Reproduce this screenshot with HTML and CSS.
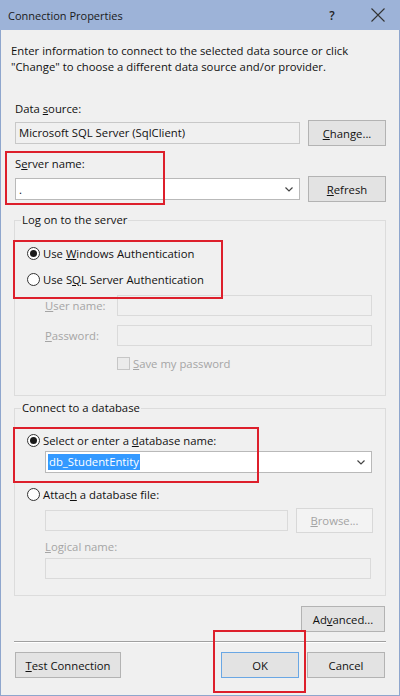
FILE: index.html
```html
<!DOCTYPE html>
<html>
<head>
<meta charset="utf-8">
<title>Connection Properties</title>
<link rel="stylesheet" href="styles.css">
</head>
<body>
<div class="window">
  <div class="titlebar">
    <span class="title">Connection Properties</span>
    <span class="help">?</span>
    <span class="close"><svg width="14" height="14" viewBox="0 0 14 14"><path d="M0.5 0.5 L13.5 13.5 M13.5 0.5 L0.5 13.5" stroke="#333" stroke-width="1.1" fill="none"/></svg></span>
  </div>
  <div class="content">
    <p class="desc">Enter information to connect to the selected data source or click<br>"Change" to choose a different data source and/or provider.</p>

    <div class="lbl lbl-ds">Data <u>s</u>ource:</div>
    <div class="row row-ds">
      <div class="textbox readonly grow">Microsoft SQL Server (SqlClient)</div>
      <div class="btn side"><u>C</u>hange...</div>
    </div>

    <div class="lbl lbl-sn">S<u>e</u>rver name:</div>
    <div class="row row-sn">
      <div class="combo grow"><span>.</span><svg class="chev" width="8" height="5" viewBox="0 0 8 5"><path d="M0.5 0.5 L4 4 L7.5 0.5" stroke="#444" stroke-width="1.2" fill="none"/></svg></div>
      <div class="btn side"><u>R</u>efresh</div>
    </div>

    <fieldset class="group group-logon">
      <legend>Log on to the server</legend>
      <div class="radio-row r1"><span class="radio checked"></span><span>Use <u>W</u>indows Authentication</span></div>
      <div class="radio-row r2"><span class="radio"></span><span>Use S<u>Q</u>L Server Authentication</span></div>
      <div class="field-row fr-user"><span class="flabel disabled"><u>U</u>ser name:</span><div class="textbox disabled-box wide"></div></div>
      <div class="field-row fr-pass"><span class="flabel disabled"><u>P</u>assword:</span><div class="textbox disabled-box wide"></div></div>
      <div class="check-row"><span class="checkbox"></span><span class="disabled"><u>S</u>ave my password</span></div>
    </fieldset>

    <fieldset class="group group-db">
      <legend>Connect to a database</legend>
      <div class="radio-row r3"><span class="radio checked"></span><span>Select or enter a <u>d</u>atabase name:</span></div>
      <div class="combo indent db-combo"><span class="sel">db_StudentEntity</span><svg class="chev" width="8" height="5" viewBox="0 0 8 5"><path d="M0.5 0.5 L4 4 L7.5 0.5" stroke="#444" stroke-width="1.2" fill="none"/></svg></div>
      <div class="radio-row r4"><span class="radio"></span><span>Attac<u>h</u> a database file:</span></div>
      <div class="row indent row-file">
        <div class="textbox disabled-box grow"></div>
        <div class="btn btn-disabled browse"><u>B</u>rowse...</div>
      </div>
      <div class="lbl indent disabled lbl-logical"><u>L</u>ogical name:</div>
      <div class="textbox disabled-box indent logical-box"></div>
    </fieldset>

    <div class="adv-row"><div class="btn adv">Ad<u>v</u>anced...</div></div>
    <div class="separator"></div>
    <div class="bottom-row">
      <div class="btn test"><u>T</u>est Connection</div>
      <div class="spacer"></div>
      <div class="btn ok">OK</div>
      <div class="btn cancel">Cancel</div>
    </div>
  </div>

  <div class="mark m1"></div>
  <div class="mark m2"></div>
  <div class="mark m3"></div>
  <div class="mark m4"></div>
</div>
</body>
</html>
```

FILE: styles.css
```css
* { box-sizing: border-box; }
html, body { margin: 0; padding: 0; }
body {
  width: 400px;
  height: 696px;
  font-family: "Open Sans", "Noto Sans", sans-serif;
  font-size: 11.3px;
  color: #111;
  background: #f0f0f0;
}
u { text-decoration: underline; text-underline-offset: 1px; }

.window {
  position: relative;
  width: 400px;
  height: 696px;
  border: 1px solid #8fa6cd;
  border-top: none;
  background: #f0f0f0;
}

.titlebar {
  height: 30px;
  background: #9db3d8;
  display: flex;
  align-items: center;
  padding-left: 8px;
  margin: 0 -1px;
}
.title { font-size: 11px; color: #1a1a1a; flex: 1; }
.help { width: 12px; font-weight: 600; font-size: 12px; color: #222; margin-right: 33px; text-align: center; }
.close { width: 14px; height: 14px; margin-right: 15px; display: flex; }

.content {
  padding: 0 13px;
}
.desc {
  margin: 13px 0 0 -3px;
  line-height: 16px;
}
.lbl { line-height: 16px; }
.lbl-ds { margin-top: 26px; margin-left: 1px; }
.lbl-sn { margin-top: 10px; margin-left: 1px; }

.row { display: flex; align-items: center; gap: 8px; height: 26px; }
.row-ds { margin-top: 3px; }
.row-sn { margin-top: 4px; }
.grow { flex: 1; }

.textbox {
  height: 22px;
  border: 1px solid #c4c4c4;
  background: #fff;
  padding: 0 3px;
  line-height: 20px;
  white-space: nowrap;
}
.textbox.readonly { background: #f0f0f0; border-color: #c8c8c8; margin-left: 1px; }
.disabled-box { background: #f0f0f0; border-color: #dadada; height: 21px; }

.combo {
  height: 22px;
  border: 1px solid #b9b9b9;
  background: #fff;
  display: flex;
  align-items: center;
  padding: 0 6px 0 3px;
  margin-left: 1px;
}
.combo span { flex: 1; }
.chev { display: block; }

.btn {
  height: 26px;
  border: 1px solid #b3b3b3;
  background: #e3e3e3;
  display: flex;
  align-items: center;
  justify-content: center;
  white-space: nowrap;
  color: #111;
}
.side { width: 78px; }
.btn-disabled { background: #f3f3f3; border-color: #d8d8d8; color: #a3a3a3; }

.group {
  margin: 10px 0 0 0;
  padding: 0 12px 24px 12px;
  border: 1px solid #dcdcdc;
  min-width: 0;
}
.group legend {
  padding: 0 1px;
  margin-left: -6px;
  line-height: 16px;
}
.group-db { margin-top: 4px; padding-bottom: 16px; }

.radio-row { display: flex; align-items: center; height: 16px; gap: 3px; }
.r1 { margin-top: 17px; }
.r2 { margin-top: 10px; }
.r3 { margin-top: 16px; }
.r4 { margin-top: 13px; }
.radio {
  width: 13px; height: 13px;
  border: 1px solid #333;
  border-radius: 50%;
  background: #fff;
  display: flex; align-items: center; justify-content: center;
  flex: none;
}
.radio.checked::after {
  content: "";
  width: 7px; height: 7px;
  border-radius: 50%;
  background: #1a1a1a;
}

.field-row { display: flex; align-items: center; margin-left: 18px; }
.fr-user { margin-top: 8px; }
.fr-pass { margin-top: 9px; }
.flabel { width: 72px; }
.wide { flex: 1; margin-right: 1px; }
.disabled { color: #a5a5a5; }

.check-row { display: flex; align-items: center; gap: 3px; height: 16px; margin: 9px 0 0 90px; }
.checkbox { width: 13px; height: 13px; border: 1px solid #c6c6c6; background: #ebebeb; flex: none; }

.indent { margin-left: 18px; }
.db-combo { margin-top: 3px; margin-right: 1px; padding-left: 2px; }
.sel { flex: none !important; background: #3399ff; color: #fff; line-height: 16px; padding: 0 1px; }
.db-combo .sel + .chev { margin-left: auto; }

.row-file { margin-top: 6px; height: 25px; }
.browse { width: 77px; height: 25px; }
.lbl-logical { margin-top: 6px; }
.logical-box { margin-top: 3px; margin-right: 2px; }

.adv-row { display: flex; justify-content: flex-end; margin-top: 10px; }
.adv { width: 84px; margin-right: 1px; }

.separator {
  margin-top: 9px;
  height: 2px;
  border-top: 1px solid #a0a0a0;
  border-bottom: 1px solid #fff;
}

.bottom-row { display: flex; gap: 8px; margin-top: 9px; }
.test { width: 106px; margin-left: 1px; }
.spacer { flex: 1; }
.ok { width: 78px; border-color: #6aa7e4; }
.cancel { width: 78px; margin-right: 1px; }

.mark { position: absolute; border: 2px solid #dd1f2b; pointer-events: none; }
.m1 { left: 4px; top: 151px; width: 160px; height: 54px; }
.m2 { left: 12px; top: 240px; width: 210px; height: 59px; }
.m3 { left: 12px; top: 427px; width: 246px; height: 56px; }
.m4 { left: 212px; top: 630px; width: 93px; height: 63px; }
```
